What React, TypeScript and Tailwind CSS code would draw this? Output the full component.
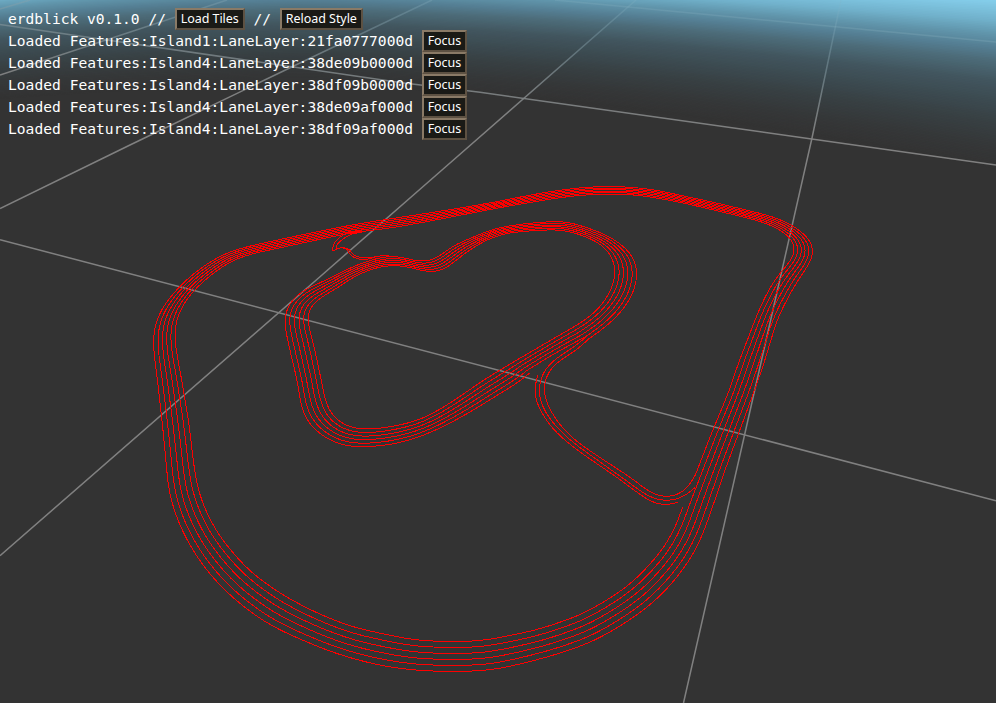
type Pt = [number, number];
// A cross-section of a road: outer edge x, y, then inner edge x, y.
type Section = [number, number, number, number];

const LANE_EDGES = 6;

const ring: Section[] = [
  [453, 671, 453, 641], [475, 670.6, 475, 640.6], [500, 667.8, 495, 637.9], [525, 662.3, 520, 633],
  [550, 655.7, 542, 627.7], [570, 649.3, 559, 622], [590, 641.7, 577, 615.5],
  [613.3, 629.5, 598, 604.7], [630, 619, 613, 595.5], [646.7, 606.7, 627, 585.5], [660, 595, 640, 574],
  [673, 581, 651, 562], [686.7, 563, 663, 547.5], [696.7, 546, 670, 535.5], [703, 532, 676, 524],
  [710, 513, 682.5, 506.5], [718, 490, 689, 490], [723, 475, 695, 475], [737.7, 435, 711, 434],
  [756.7, 383, 731.5, 383], [763, 365, 737.5, 365], [771.7, 336.7, 748.7, 336], [780, 313, 758, 312],
  [786.7, 300, 765, 297], [796.7, 281.7, 776, 278], [808.3, 263, 788.3, 261.7], [812.7, 254, 794, 253],
  [812.3, 246.7, 794.3, 246], [806.7, 238, 790, 239], [798.3, 230, 783.3, 233], [786.7, 222.7, 775, 227.5],
  [770, 216, 762, 222], [746.7, 210, 741, 216.3], [713, 202, 709, 208.7], [680, 195, 677, 201.5],
  [653, 189.5, 650, 196.8], [633, 187.3, 630, 194.4], [605, 186.3, 605, 193.8], [567, 189, 567, 196.5],
  [533, 194.3, 533, 201.7], [500, 200.7, 500, 207.3], [470, 206, 470, 213], [420, 214, 420, 222.5],
  [387, 219, 387, 228], [353, 224.5, 353, 232.5], [307, 233.5, 307, 241.7], [273, 240.7, 273, 249],
  [246.7, 246.7, 250, 254.3], [226.7, 253, 233, 260.5], [210, 262, 217.5, 270], [193, 274, 203, 281.7],
  [178.3, 288, 190, 295], [166.7, 301.7, 181.7, 308], [158.3, 316.7, 176, 323], [154, 333, 175, 336.7],
  [153.7, 346.7, 176.3, 350], [156.7, 375, 181, 377], [163, 432, 189, 426], [166, 463, 194, 466],
  [169.5, 492, 198, 488], [178, 520, 205, 508], [189.5, 544, 215, 528], [202.5, 564, 226, 544],
  [216, 580.5, 237, 557], [230.5, 595, 250, 570.5], [246.7, 608.5, 266, 583], [263, 620, 282, 594],
  [283, 631, 298, 603], [303, 640, 316, 612], [325, 649, 335, 620], [350, 657.3, 358, 627.8],
  [375, 663.7, 381, 633], [400, 668, 404, 637.7], [425, 670.4, 425, 640.3], [453, 671, 453, 641],
];

// Starts where the outer edge leaves for the connector.
const infield: Section[] = [
  [530, 372.3, 517, 359.5], [516.7, 382.7, 503, 368], [500, 393, 488, 377], [470, 411.5, 459, 396.5],
  [443, 426, 434, 412], [420, 436, 415, 420.5], [396.7, 442.7, 395, 425.3], [370, 446, 373, 428.3],
  [350, 445.7, 358, 428], [333, 440.7, 343, 423], [320, 433, 333, 415], [310, 423.3, 328, 407],
  [303.3, 411.7, 325, 397], [298.3, 386.7, 320.7, 378.3], [291.7, 358, 315, 351.7], [286.3, 331, 309.5, 326],
  [285.5, 313, 307.7, 314], [291.7, 301.7, 311.7, 306], [303, 291, 320, 298.3], [320, 282.7, 337, 288],
  [337, 274, 353, 277], [353, 266.5, 369, 270.3], [368, 261, 384, 266], [384, 257, 395, 265.5],
  [397, 256.2, 404, 266.3], [410, 259, 420, 269.3], [423, 261, 433, 271.5], [433, 259, 443, 269],
  [443, 252.7, 452, 262.5], [456.7, 243.3, 465, 253], [470, 239, 480, 243.5], [483, 232.3, 491, 238],
  [503, 227, 504, 234], [533, 222.7, 533, 230.5], [553, 221.7, 550, 229.8], [568, 222, 561, 230],
  [583, 226.7, 575, 233], [600, 232.3, 586, 237.5], [616.7, 241.7, 600, 244], [630.7, 255, 609, 254],
  [635, 263, 614, 265], [636, 273, 614.3, 275], [633.3, 290, 610, 290], [623, 308, 602, 303],
  [606.7, 325, 590, 315.5], [588, 339, 572, 327.5],
];

const infieldReturn: Section[] = [
  [588, 339, 572, 327.5], [560, 354, 547, 342],
  [530, 372.3, 517, 359.5],
];

const connector: Pt[][] = [
  [[588, 339], [575, 350.7], [558, 361.7], [551.7, 368], [545.7, 380], [544.3, 393], [547.7, 403], [556.7, 420], [570, 435], [600, 457.3], [620, 470.5], [640, 484], [650, 491.7], [660, 495.3], [673, 495], [683, 490.7], [690, 483], [695, 475]],
  [[590, 333], [580, 341.7], [565, 352.7], [553, 360.7], [546.7, 368], [540.7, 380], [539.3, 393], [541.7, 403], [550, 418.3], [563, 433], [600, 461.7], [630, 483], [645, 493.3], [656.7, 499], [668, 499.3], [679, 497.7], [687, 494], [695, 487]],
  [[537.7, 375], [535, 384], [535, 395], [540, 408], [550, 425], [563, 438], [600, 465.7], [616.7, 477], [636.7, 491.7], [648, 499], [658, 503.3], [675, 503.4], [678, 502]],
];

// Hairpin link by the north-west straight.
const hairpin: Pt[][] = [
  [[362, 230.5], [347, 233], [340, 236.7], [334, 243], [332.7, 250], [335, 249.5], [340, 247.7], [346, 248.5], [350, 254], [356, 258], [366, 259], [380, 255.7], [397, 256.2]],
  [[362, 232], [351, 234], [344, 238], [338, 243], [336.5, 248], [343, 247.3], [349, 249.5], [354, 255], [362, 257.3], [372, 257], [380, 255.7]],
];

function toPath(points: Pt[]): string {
  let d = `M${points[0][0].toFixed(2)} ${points[0][1].toFixed(2)}`;
  for (let i = 0; i < points.length - 1; i++) {
    const a = points[Math.max(i - 1, 0)];
    const b = points[i];
    const c = points[i + 1];
    const e = points[Math.min(i + 2, points.length - 1)];
    const values = [
      b[0] + (c[0] - a[0]) / 6, b[1] + (c[1] - a[1]) / 6,
      c[0] - (e[0] - b[0]) / 6, c[1] - (e[1] - b[1]) / 6, c[0], c[1],
    ];
    d += "C" + values.map((v) => v.toFixed(2)).join(" ");
  }
  return d;
}

// Splits a polyline into steps of equal length.
function resample(points: Pt[], step: number): Pt[] {
  const lengths = [0];
  for (let i = 1; i < points.length; i++) {
    lengths.push(lengths[i - 1] + Math.hypot(points[i][0] - points[i - 1][0], points[i][1] - points[i - 1][1]));
  }
  const total = lengths[lengths.length - 1];
  const count = Math.max(2, Math.round(total / step));
  const result: Pt[] = [];
  let k = 1;
  for (let n = 0; n <= count; n++) {
    const s = (total * n) / count;
    while (k < points.length - 1 && lengths[k] < s) k++;
    const f = (s - lengths[k - 1]) / (lengths[k] - lengths[k - 1]);
    result.push([
      points[k - 1][0] + (points[k][0] - points[k - 1][0]) * f,
      points[k - 1][1] + (points[k][1] - points[k - 1][1]) * f,
    ]);
  }
  return result;
}

// Hermite curve whose tangents are weighted by the neighbouring segment lengths.
function densify(points: Pt[]): Pt[] {
  const tangents = points.map((p, i): Pt => {
    const a = points[Math.max(i - 1, 0)];
    const c = points[Math.min(i + 1, points.length - 1)];
    const la = Math.hypot(p[0] - a[0], p[1] - a[1]);
    const lc = Math.hypot(c[0] - p[0], c[1] - p[1]);
    if (la === 0) return [(c[0] - p[0]) / lc, (c[1] - p[1]) / lc];
    if (lc === 0) return [(p[0] - a[0]) / la, (p[1] - a[1]) / la];
    const w = lc / (la + lc);
    return [
      (w * (p[0] - a[0])) / la + ((1 - w) * (c[0] - p[0])) / lc,
      (w * (p[1] - a[1])) / la + ((1 - w) * (c[1] - p[1])) / lc,
    ];
  });
  const result: Pt[] = [points[0]];
  for (let i = 0; i < points.length - 1; i++) {
    const p = points[i];
    const q = points[i + 1];
    const len = Math.hypot(q[0] - p[0], q[1] - p[1]);
    for (let n = 1; n <= 12; n++) {
      const t = n / 12;
      const h1 = 2 * t ** 3 - 3 * t ** 2 + 1;
      const h2 = t ** 3 - 2 * t ** 2 + t;
      const h3 = 1 - h1;
      const h4 = t ** 3 - t ** 2;
      result.push([
        h1 * p[0] + h2 * len * tangents[i][0] + h3 * q[0] + h4 * len * tangents[i + 1][0],
        h1 * p[1] + h2 * len * tangents[i][1] + h3 * q[1] + h4 * len * tangents[i + 1][1],
      ]);
    }
  }
  return result;
}

// Alternating shrink and inflate passes keep the curve's size.
function smooth(points: Pt[]): Pt[] {
  let current = resample(densify(points), 5);
  for (let pass = 0; pass < 120; pass++) {
    const weight = pass % 2 === 0 ? 0.5 : -0.51;
    const previous = current;
    current = previous.map((p, i): Pt => {
      if (i === 0 || i === previous.length - 1) return p;
      const a = previous[i - 1];
      const c = previous[i + 1];
      return [p[0] + weight * ((a[0] + c[0]) / 2 - p[0]), p[1] + weight * ((a[1] + c[1]) / 2 - p[1])];
    });
  }
  return current;
}

function lane(sections: Section[], index: number): string {
  const t = index / (LANE_EDGES - 1);
  return toPath(smooth(sections.map(([ox, oy, ix, iy]): Pt => [ox + (ix - ox) * t, oy + (iy - oy) * t])));
}

const lanePaths: string[] = [
  ...[0, 1, 2, 3, 4].map((i) => lane(ring, i)),
  lane(ring.slice(0, 16), 5),
  lane(ring.slice(17), 5),
  ...[0, 1, 2, 3, 4, 5].map((i) => lane(infield, i)),
  ...[1, 2, 3, 4, 5].map((i) => lane(infieldReturn, i)),
  ...connector.map((points) => toPath(smooth(points))),
  ...hairpin.map(toPath),
];

// Atmosphere colours by depth, from clear ground to the horizon.
const hazeStops: [number, number, number, number][] = [
  [0, 51, 51, 51], [0.12, 53, 55, 56], [0.27, 56, 64, 67], [0.39, 60, 74, 80], [0.52, 66, 86, 95],
  [0.64, 77, 108, 121], [0.72, 85, 127, 148], [0.8, 97, 150, 172], [0.88, 113, 177, 203], [1, 133, 206, 235],
];

function hazeColor(t: number): string {
  const k = Math.max(1, hazeStops.findIndex((s) => s[0] >= t));
  const a = hazeStops[k - 1];
  const b = hazeStops[k];
  const f = (t - a[0]) / (b[0] - a[0]);
  const mix = (n: number) => Math.round(a[n] + (b[n] - a[n]) * f);
  return `rgb(${mix(1)},${mix(2)},${mix(3)})`;
}

const hazeBands = Array.from({ length: 101 }, (_, i) => {
  const t = i / 100;
  const points: string[] = [];
  for (let x = 0; x <= 1000; x += 20) {
    const right = Math.max(0, (x - 300) / 696);
    const left = Math.max(0, (300 - x) / 300);
    const depth = 86 + 83 * Math.pow(right, 1.7) + 13 * Math.pow(left, 1.8);
    const reach = 118 + 50 * right * right - 4 * left;
    points.push(`${x},${(depth - t * reach).toFixed(2)}`);
  }
  return { fill: hazeColor(t), d: `M0,-200L${points.join("L")}L1000,-200Z` };
});

const gridLines = [
  "M0 239.7L996 500.7",
  "M0 555.7L320 276.7L442 170L636 0",
  "M683.5 703L745 433L812 138L841 0",
  "M0 24.5L400 82.5L480 92.3L996 165",
  "M0 208.5L130 145L300 63L432 0",
  "M0 75L227 0",
  "M555 0L996 42",
  "M0 9L30 0",
];

const tiles = ["Island1:LaneLayer:21fa0777000d", "Island4:LaneLayer:38de09b0000d", "Island4:LaneLayer:38df09b0000d", "Island4:LaneLayer:38de09af000d", "Island4:LaneLayer:38df09af000d"];

function PanelButton({ label, width }: { label: string; width: string }) {
  return (
    <button
      className={`${width} flex h-[22px] shrink-0 items-center justify-center whitespace-nowrap border-2 border-t-[#8a7a66] border-l-[#8a7a66] border-r-[#5d5142] border-b-[#5d5142] bg-[#1a1a16] pt-px font-['Noto_Sans',sans-serif] text-[12.5px] leading-none tracking-[-0.05px] text-white`}
    >
      {label}
    </button>
  );
}

export default function App() {
  return (
    <main className="relative h-[703px] w-[996px] overflow-hidden bg-[#333333]">
      <svg className="absolute inset-0" width="996" height="703" viewBox="0 0 996 703" fill="none">
        <defs>
          <linearGradient id="gridFade" gradientUnits="userSpaceOnUse" x1="10" y1="-60" x2="0" y2="80">
            <stop offset="0" stopColor="#7fb4c8" stopOpacity="0.2" />
            <stop offset="0.45" stopColor="#86a0aa" stopOpacity="0.45" />
            <stop offset="0.8" stopColor="#808688" stopOpacity="0.85" />
            <stop offset="1" stopColor="#808080" />
          </linearGradient>
        </defs>
        {hazeBands.map((band, i) => (
          <path key={i} d={band.d} fill={band.fill} />
        ))}
        {gridLines.map((d) => (
          <path key={d} d={d} stroke="url(#gridFade)" strokeWidth="1.5" />
        ))}
        <g transform="translate(0.2 0.3)">
          {lanePaths.map((d, i) => (
            <path key={i} d={d} stroke="#ff0000" strokeWidth="1" shapeRendering="crispEdges" />
          ))}
        </g>
      </svg>
      <section className="relative flex flex-col pt-2 pl-2 font-['DejaVu_Sans_Mono',monospace] text-[14.6px] tracking-[0.02px] text-white">
        <div className="flex h-[22px] items-center whitespace-pre tracking-[-0.01px]">
          <span>{"erdblick v0.1.0 // "}</span>
          <PanelButton label="Load Tiles" width="w-[70px]" />
          <span>{" // "}</span>
          <PanelButton label="Reload Style" width="w-[83px]" />
        </div>
        {tiles.map((tile) => (
          <div key={tile} className="flex h-[22px] items-center whitespace-pre">
            <span>{`Loaded Features:${tile} `}</span>
            <PanelButton label="Focus" width="w-[45px]" />
          </div>
        ))}
      </section>
    </main>
  );
}
